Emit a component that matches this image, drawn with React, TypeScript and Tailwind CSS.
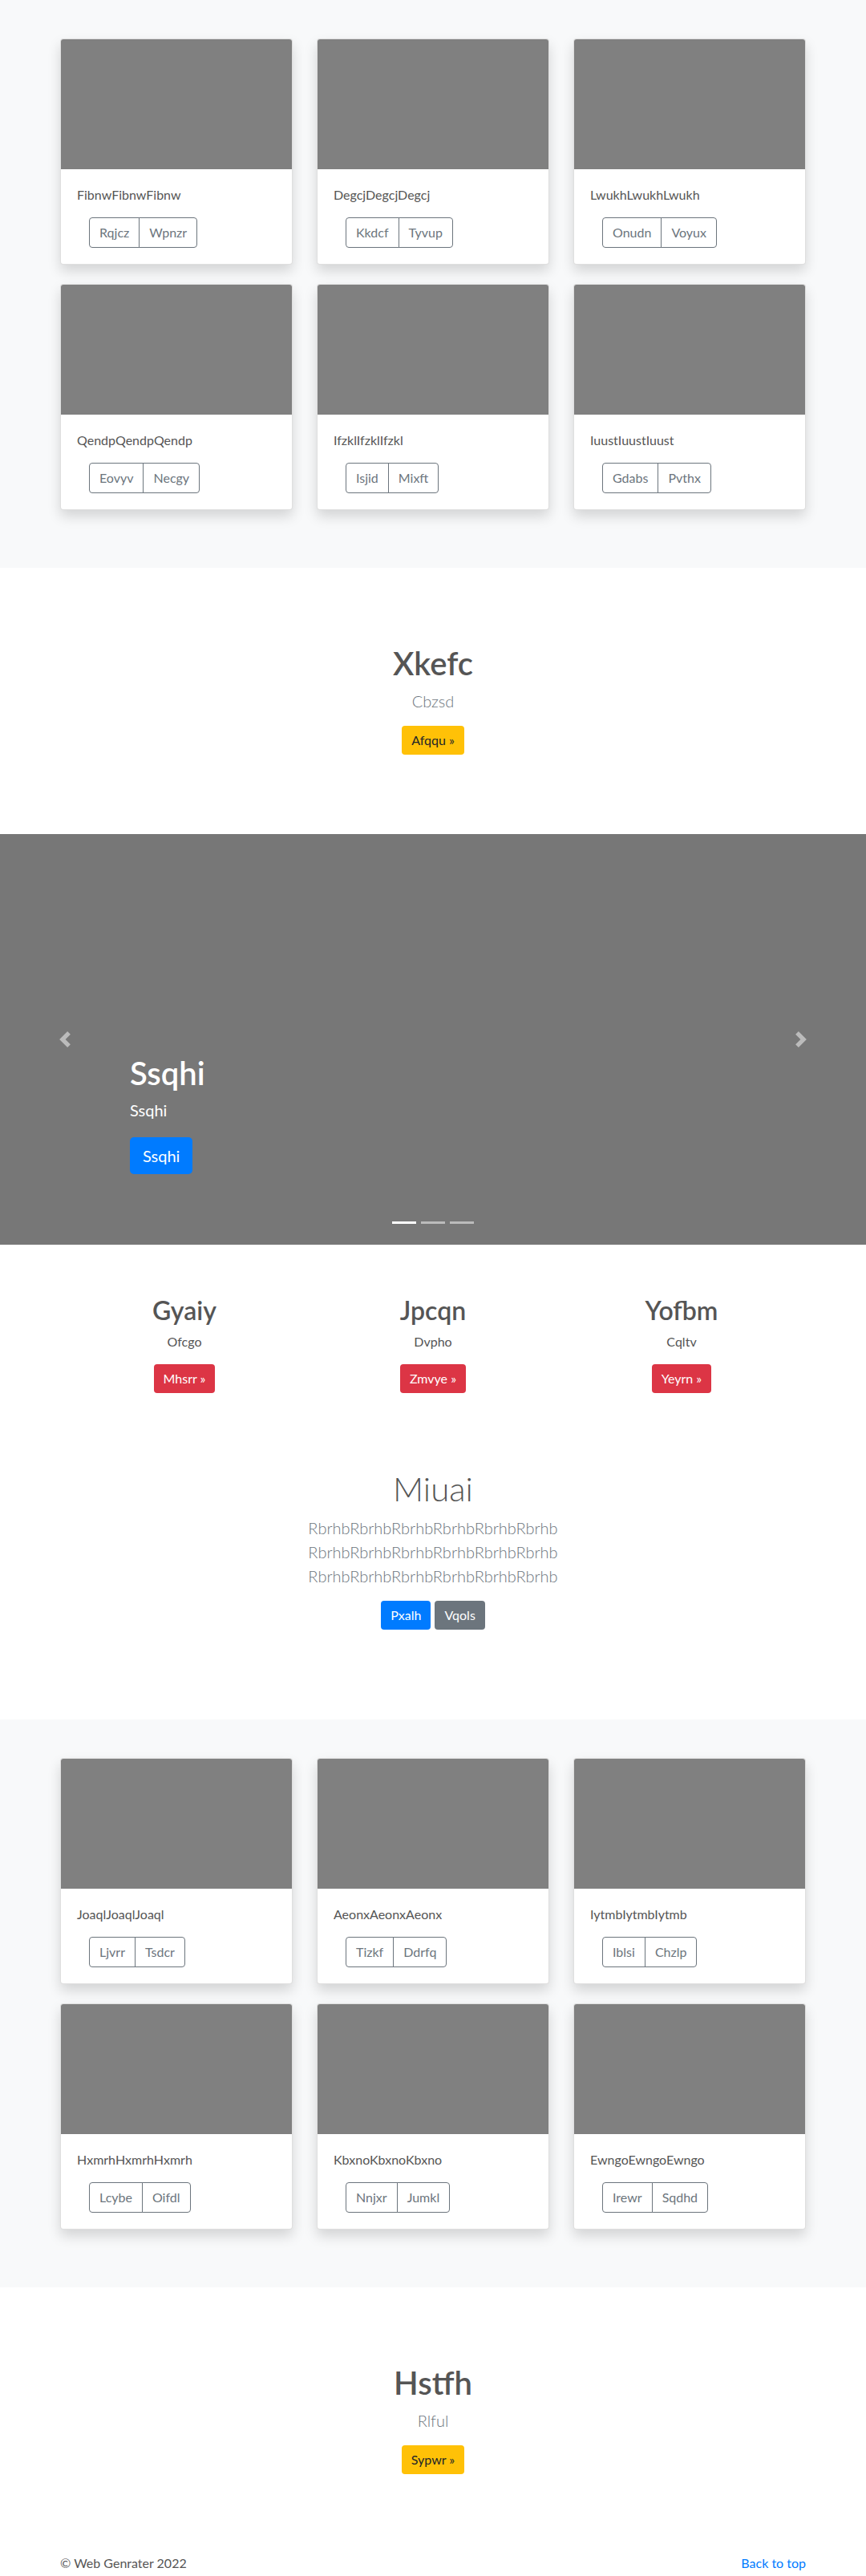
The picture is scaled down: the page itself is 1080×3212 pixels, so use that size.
import { useState } from 'react';

type CardItem = { title: string; a: string; b: string };

const albumOne: CardItem[] = [
  { title: 'FibnwFibnwFibnw', a: 'Rqjcz', b: 'Wpnzr' },
  { title: 'DegcjDegcjDegcj', a: 'Kkdcf', b: 'Tyvup' },
  { title: 'LwukhLwukhLwukh', a: 'Onudn', b: 'Voyux' },
  { title: 'QendpQendpQendp', a: 'Eovyv', b: 'Necgy' },
  { title: 'IfzklIfzklIfzkl', a: 'Isjid', b: 'Mixft' },
  { title: 'IuustIuustIuust', a: 'Gdabs', b: 'Pvthx' },
];

const albumTwo: CardItem[] = [
  { title: 'JoaqlJoaqlJoaql', a: 'Ljvrr', b: 'Tsdcr' },
  { title: 'AeonxAeonxAeonx', a: 'Tizkf', b: 'Ddrfq' },
  { title: 'IytmbIytmbIytmb', a: 'Iblsi', b: 'Chzlp' },
  { title: 'HxmrhHxmrhHxmrh', a: 'Lcybe', b: 'Oifdl' },
  { title: 'KbxnoKbxnoKbxno', a: 'Nnjxr', b: 'Jumkl' },
  { title: 'EwngoEwngoEwngo', a: 'Irewr', b: 'Sqdhd' },
];

const marketing = [
  { title: 'Gyaiy', text: 'Ofcgo', btn: 'Mhsrr »' },
  { title: 'Jpcqn', text: 'Dvpho', btn: 'Zmvye »' },
  { title: 'Yofbm', text: 'Cqltv', btn: 'Yeyrn »' },
];

function AlbumCard({ item }: { item: CardItem }) {
  return (
    <div className="mb-6 overflow-hidden rounded border border-black/[0.125] bg-white shadow-[0_8px_16px_rgba(0,0,0,0.15)]">
      <div className="h-[162px] bg-[#808080]" />
      <div className="p-5">
        <p className="mb-4 text-[16px] leading-6 text-[#555]">{item.title}</p>
        <div className="ml-[15px] flex">
          <button className="rounded-l border border-[#6c757d] px-3 py-[6px] text-[16px] leading-6 text-[#6c757d]">
            {item.a}
          </button>
          <button className="-ml-px rounded-r border border-[#6c757d] px-3 py-[6px] text-[16px] leading-6 text-[#6c757d]">
            {item.b}
          </button>
        </div>
      </div>
    </div>
  );
}

function Album({ items }: { items: CardItem[] }) {
  return (
    <section className="h-[708px] bg-[#f8f9fa] py-12">
      <div className="mx-auto grid w-[960px] grid-cols-3 gap-x-[30px] px-[15px]">
        {items.map((item) => (
          <AlbumCard key={item.title} item={item} />
        ))}
      </div>
    </section>
  );
}

function Jumbo({ title, lead, btn }: { title: string; lead: string; btn: string }) {
  return (
    <section className="h-[332px] bg-white pt-[95px] text-center">
      <h1 className="mb-2 text-[40px] leading-[1.2] font-semibold text-[#555]">{title}</h1>
      <p className="mb-4 text-[20px] leading-[1.5] font-light text-[#6c757d]">{lead}</p>
      <a className="inline-block rounded bg-[#ffc107] px-3 py-[6px] text-[16px] leading-6 text-[#212529]">{btn}</a>
    </section>
  );
}

function Carousel() {
  const [active, setActive] = useState(0);

  return (
    <div className="relative h-[512px] bg-[#777]">
      <button
        className="absolute top-0 bottom-0 left-0 flex w-[15%] items-center justify-center opacity-50"
        onClick={() => setActive((active + 2) % 3)}
      >
        <svg width="20" height="20" viewBox="0 0 8 8" fill="#fff">
          <path d="M5.25 0l-4 4 4 4 1.5-1.5L4.25 4l2.5-2.5L5.25 0z" />
        </svg>
      </button>
      <button
        className="absolute top-0 right-0 bottom-0 flex w-[15%] items-center justify-center opacity-50"
        onClick={() => setActive((active + 1) % 3)}
      >
        <svg width="20" height="20" viewBox="0 0 8 8" fill="#fff">
          <path d="M2.75 0l-1.5 1.5L3.75 4l-2.5 2.5L2.75 8l4-4-4-4z" />
        </svg>
      </button>

      <div className="absolute right-[15%] bottom-12 left-[15%] py-5 text-left text-white">
        <h1 className="mb-2 text-[40px] leading-[1.2] font-semibold">Ssqhi</h1>
        <p className="mb-5 text-[20px] leading-[1.4]">Ssqhi</p>
        <p className="mb-5">
          <a className="inline-block rounded-[5px] bg-[#007bff] px-4 py-2 text-[20px] leading-[1.5] text-white">Ssqhi</a>
        </p>
      </div>

      <div className="absolute right-0 bottom-4 left-0 flex justify-center">
        {[0, 1, 2].map((i) => (
          <span
            key={i}
            onClick={() => setActive(i)}
            className={i === active ? 'mx-[3px] my-[10px] h-[3px] w-[30px] bg-white' : 'mx-[3px] my-[10px] h-[3px] w-[30px] bg-white/50'}
          />
        ))}
      </div>
    </div>
  );
}

export default function App() {
  return (
    <div className="font-['Lato','Liberation_Sans',sans-serif] text-[#555]">
      <Album items={albumOne} />
      <Jumbo title="Xkefc" lead="Cbzsd" btn="Afqqu »" />
      <Carousel />

      <section className="bg-white pt-[63px]">
        <div className="mx-auto grid w-[960px] grid-cols-3 px-[15px] text-center">
          {marketing.map((m) => (
            <div key={m.title}>
              <h2 className="mb-2 text-[32px] leading-[1.2] font-semibold text-[#555]">{m.title}</h2>
              <p className="mb-4 text-[16px] leading-6 text-[#555]">{m.text}</p>
              <a className="inline-block rounded bg-[#dc3545] px-3 py-[6px] text-[16px] leading-6 text-white">{m.btn}</a>
            </div>
          ))}
        </div>

        <div className="mt-[94px] pb-[104px] text-center">
          <h1 className="mb-2 text-[42px] leading-[1.2] font-light text-[#555]">Miuai</h1>
          <p className="mb-4 text-[20px] leading-[1.5] font-light text-[#6c757d]">
            RbrhbRbrhbRbrhbRbrhbRbrhbRbrhb
            <br />
            RbrhbRbrhbRbrhbRbrhbRbrhbRbrhb
            <br />
            RbrhbRbrhbRbrhbRbrhbRbrhbRbrhb
          </p>
          <div className="my-2 flex justify-center gap-[5px]">
            <a className="rounded bg-[#007bff] px-3 py-[6px] text-[16px] leading-6 text-white">Pxalh</a>
            <a className="rounded bg-[#6c757d] px-3 py-[6px] text-[16px] leading-6 text-white">Vqols</a>
          </div>
        </div>
      </section>

      <Album items={albumTwo} />
      <Jumbo title="Hstfh" lead="Rlful" btn="Sypwr »" />

      <footer className="mx-auto flex w-[960px] justify-between px-[15px] text-[16px] leading-6">
        <p className="text-[#555]">© Web Genrater 2022</p>
        <a className="text-[#007bff]">Back to top</a>
      </footer>
    </div>
  );
}
